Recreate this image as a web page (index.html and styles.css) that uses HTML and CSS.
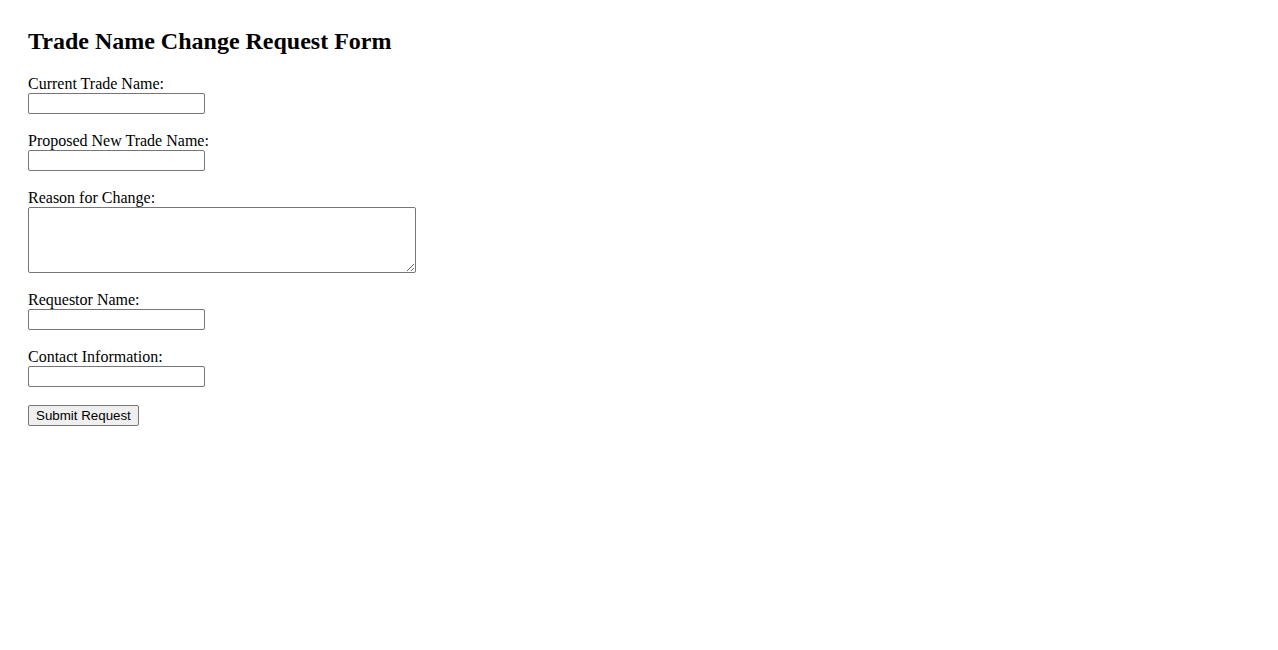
FILE: index.html
```html
<!DOCTYPE html>
<html>
<head>
<meta charset="utf-8">
<title>Trade Name Change Request Form</title>
<link rel="stylesheet" href="styles.css">
</head>
<body>
<div class="page">
  <h2 class="title">Trade Name Change Request Form</h2>
  <form class="form">
    <div class="field"><label class="label" for="current">Current Trade Name:</label><input class="input" type="text" id="current"></div>
    <div class="field"><label class="label" for="proposed">Proposed New Trade Name:</label><input class="input" type="text" id="proposed"></div>
    <div class="field"><label class="label" for="reason">Reason for Change:</label><textarea class="textarea" id="reason"></textarea></div>
    <div class="field"><label class="label" for="requestor">Requestor Name:</label><input class="input" type="text" id="requestor"></div>
    <div class="field"><label class="label" for="contact">Contact Information:</label><input class="input" type="text" id="contact"></div>
    <div class="field"><button class="submit" type="submit">Submit Request</button></div>
  </form>
</div>
</body>
</html>
```
FILE: styles.css
```css
body {
  margin: 0;
  font-family: "Liberation Serif", "Times New Roman", serif;
  font-size: 16px;
  color: #000;
  background: #fff;
}
.page {
  padding: 28px;
}
.title {
  margin: 0;
  height: 26px;
  line-height: 26px;
  font-size: 24px;
  font-weight: bold;
}
.form {
  margin: 21px 0 0;
  display: flex;
  flex-direction: column;
  gap: 18px;
}
.field {
  display: flex;
  flex-direction: column;
  align-items: flex-start;
}
.label {
  display: block;
  height: 18px;
  line-height: 18px;
}
.input {
  box-sizing: border-box;
  width: 177px;
  height: 21px;
  font-family: "Liberation Sans", Arial, sans-serif;
  font-size: 13.333px;
  border: 1px solid #767676;
  border-radius: 2px;
  padding: 1px 2px;
  margin: 0;
}
.textarea {
  box-sizing: border-box;
  width: 388px;
  height: 66px;
  font-family: "Liberation Mono", monospace;
  font-size: 13.333px;
  border: 1px solid #767676;
  border-radius: 2px;
  padding: 2px;
  margin: 0;
}
.submit {
  box-sizing: border-box;
  height: 21px;
  font-family: "Liberation Sans", Arial, sans-serif;
  font-size: 13.333px;
  padding: 1px 7px;
  border: 1px solid #767676;
  border-radius: 2px;
  background: #efefef;
  color: #000;
  margin: 0;
}
```
